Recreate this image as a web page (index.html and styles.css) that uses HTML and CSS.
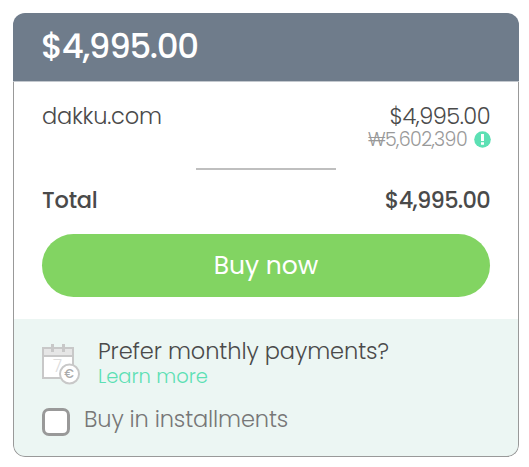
FILE: index.html
```html
<!DOCTYPE html>
<html lang="en">
<head>
    <meta charset="UTF-8">
    <meta name="viewport" content="width=device-width, initial-scale=1.0">
    <title>Checkout</title>
    <link rel="stylesheet" href="styles.css">
</head>
<body>
    <div class="card">
        <div class="card-header"><span class="amount">$4,995.00</span></div>
        <div class="card-body">
            <div class="row item">
                <span class="domain">dakku.com</span>
                <span class="price">$4,995.00</span>
            </div>
            <div class="converted">
                <span class="won">₩5,602,390</span>
                <svg class="info" width="17" height="17" viewBox="0 0 17 17">
                    <circle cx="8.5" cy="8.5" r="8.3" fill="#5ce0b4"/>
                    <path d="M7 3h3v7H7zM7 11.3h3v2.4H7z" fill="#fff"/>
                </svg>
            </div>
            <hr class="divider">
            <div class="row total">
                <span class="total-label">Total</span>
                <span class="total-price">$4,995.00</span>
            </div>
            <button class="buy"><span>Buy now</span></button>
        </div>
        <div class="card-footer">
            <div class="monthly">
                <svg class="calendar" width="38" height="41" viewBox="0 0 38 41">
                    <path d="M1 4h30v30H1z" fill="#fff"/>
                    <path d="M1 4h30v8H1z" fill="#e6e6e6"/>
                    <path d="M1 4h30v30H1zM1 12h30" fill="none" stroke="#c8c8c8" stroke-width="2"/>
                    <path d="M10.5 0v8M21.5 0v8" stroke="#c8c8c8" stroke-width="3"/>
                    <text x="11" y="27.5" class="day">7</text>
                    <circle cx="27.5" cy="30" r="9.5" fill="#fff" stroke="#c8c8c8" stroke-width="2"/>
                    <text x="27" y="34.3" class="euro">€</text>
                </svg>
                <div class="monthly-text">
                    <div class="question">Prefer monthly payments?</div>
                    <a class="learn">Learn more</a>
                </div>
            </div>
            <label class="installments">
                <input type="checkbox" class="check">
                <span class="check-label">Buy in installments</span>
            </label>
        </div>
    </div>
</body>
</html>
```
FILE: styles.css
```css
body {
    margin: 0;
    padding: 13px 10px 10px 13px;
    background-color: #fff;
    font-family: Poppins, Inter, sans-serif;
    font-weight: 300;
    color: #4a4a4a;
}
.card {
    width: 506px;
    height: 444px;
    box-sizing: border-box;
    border-radius: 12px;
    overflow: hidden;
    display: flex;
    flex-direction: column;
}
.card-header {
    height: 69px;
    box-sizing: border-box;
    padding-left: 28px;
    background-color: #6f7c8b;
    border-bottom: 1px solid #c3c8ce;
    color: #fff;
}
.amount {
    font-size: 34px;
    line-height: 67px;
    font-weight: 500;
    letter-spacing: -1.3px;
}
.card-body {
    height: 237px;
    box-sizing: border-box;
    padding: 20px 28px 0;
    border: solid #999;
    border-width: 0 1px;
}
.row {
    display: flex;
    justify-content: space-between;
    font-size: 22.5px;
    line-height: 28px;
    letter-spacing: -0.2px;
}
.price {
    letter-spacing: -0.5px;
}
.total-price {
    letter-spacing: -0.7px;
}
.converted {
    display: flex;
    justify-content: flex-end;
    align-items: center;
    gap: 7px;
    height: 18px;
    margin-top: 1px;
    font-size: 19px;
    line-height: 16px;
    letter-spacing: -0.6px;
    color: #999;
}
.info {
    margin-right: -1px;
    margin-top: -2px;
}
.divider {
    width: 140px;
    height: 2px;
    margin: 19px auto 16px;
    border: 0;
    background-color: #bfbfbf;
}
.total {
    font-weight: 500;
}
.buy {
    display: block;
    width: 448px;
    height: 63px;
    margin-top: 20px;
    padding: 0;
    border: 0;
    border-radius: 32px;
    background-color: #82d462;
    color: #fff;
    font-family: inherit;
    font-size: 25px;
    font-weight: 400;
}
.card-footer {
    flex: 1;
    padding: 18px 28px 0;
    background-color: #ecf6f3;
    border: 1px solid #999;
    border-top: 0;
    border-radius: 0 0 12px 12px;
}
.monthly {
    display: flex;
    gap: 18px;
}
.calendar {
    margin-top: 7px;
}
.day {
    font-size: 17px;
    fill: #ddd;
}
.euro {
    font-size: 12px;
    font-weight: 500;
    fill: #aaa;
    text-anchor: middle;
}
.question {
    font-size: 22.5px;
    line-height: 29px;
    letter-spacing: -0.08px;
    white-space: nowrap;
}
.learn {
    display: block;
    font-size: 19.5px;
    line-height: 21px;
    color: #5ce0b4;
}
.installments {
    display: flex;
    align-items: center;
    gap: 14px;
    margin-top: 21px;
    color: #777;
    font-size: 22.5px;
    line-height: 28px;
    letter-spacing: -0.14px;
}
.check {
    appearance: none;
    width: 28px;
    height: 28px;
    margin: 0;
    box-sizing: border-box;
    border: 3px solid #999;
    border-radius: 7px;
    background-color: #fff;
}
.check-label {
    margin-top: -7px;
}
```
